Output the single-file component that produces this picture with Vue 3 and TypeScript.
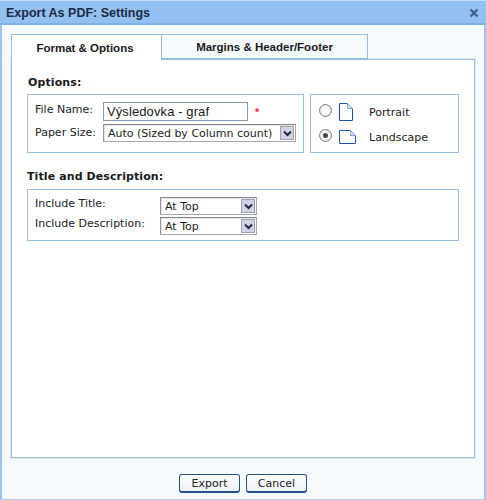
<script setup lang="ts">
const includes: string[] = ['Include Title:', 'Include Description:']
</script>

<template>
  <div class="window">
    <header class="titlebar">
      <span class="title">Export As PDF: Settings</span>
      <svg class="close" width="10" height="10" viewBox="0 0 10 10">
        <path d="M1.5 1.5 L8.5 8.5 M8.5 1.5 L1.5 8.5" stroke="#3f5f8a" stroke-width="2.2" fill="none" />
      </svg>
    </header>
    <main class="body">
      <nav class="tabs">
        <div class="tab active">Format &amp; Options</div>
        <div class="tab second">Margins &amp; Header/Footer</div>
      </nav>
      <section class="panel">
        <h2 class="heading first">Options:</h2>
        <div class="row">
          <div class="box options">
            <div class="line file">
              <span class="label name-label">File Name:</span>
              <div class="input">Výsledovka - graf</div>
              <span class="star">*</span>
            </div>
            <div class="line">
              <span class="label name-label paper">Paper Size:</span>
              <div class="select wide">
                <span class="value">Auto (Sized by Column count)</span>
                <span class="arrow">
                  <svg width="9" height="7" viewBox="0 0 9 7"><path d="M1 1.5 L4.5 5 L8 1.5" stroke="#1f2a44" stroke-width="2" fill="none" /></svg>
                </span>
              </div>
            </div>
          </div>
          <div class="box orient">
            <div class="orient-line">
              <span class="radio"></span>
              <svg class="page" width="15" height="19" viewBox="0 0 15 19">
                <path d="M1.5 .5 H9.5 L14.5 5.5 V17.5 H1.5 Z" fill="#fff" stroke="#1c56b4" />
                <path d="M9.5 .5 V5.5 H14.5" fill="#dbe7f7" stroke="#7ea4dc" />
              </svg>
              <span class="orient-text">Portrait</span>
            </div>
            <div class="orient-line">
              <span class="radio checked"></span>
              <svg class="page" width="19" height="15" viewBox="0 0 19 15">
                <path d="M1.5 .5 H12.5 L17.5 5.5 V13.5 H1.5 Z" fill="#fff" stroke="#1c56b4" />
                <path d="M12.5 .5 V5.5 H17.5" fill="#dbe7f7" stroke="#7ea4dc" />
              </svg>
              <span class="orient-text land">Landscape</span>
            </div>
          </div>
        </div>
        <h2 class="heading second-heading">Title and Description:</h2>
        <div class="box titles">
          <div v-for="item in includes" :key="item" class="line include">
            <span class="label include-label">{{ item }}</span>
            <div class="select narrow">
              <span class="value">At Top</span>
              <span class="arrow">
                <svg width="9" height="7" viewBox="0 0 9 7"><path d="M1 1.5 L4.5 5 L8 1.5" stroke="#1f2a44" stroke-width="2" fill="none" /></svg>
              </span>
            </div>
          </div>
        </div>
      </section>
      <footer class="actions">
        <button class="btn">Export</button>
        <button class="btn">Cancel</button>
      </footer>
    </main>
  </div>
</template>

<style>
html, body { margin: 0; background: #fff; }
</style>

<style scoped>
.window {
  width: 486px;
  height: 500px;
  box-sizing: border-box;
  display: flex;
  flex-direction: column;
  border-left: 2px solid #9cc4ec;
  border-right: 2px solid #9cc4ec;
  border-bottom: 1px solid #a9c8e8;
  background: #f5faff;
  font-family: "DejaVu Sans", Verdana, sans-serif;
  color: #222;
}
.titlebar {
  margin: 0 -2px;
  height: 25px;
  box-sizing: border-box;
  display: flex;
  align-items: center;
  justify-content: space-between;
  padding: 2px 7px 0 6px;
  background: #92c0f0;
  border-top: 1px solid #c2dcf6;
  border-bottom: 2px solid #7fb0e6;
}
.title {
  font: bold 12.5px "Liberation Sans", Arial, sans-serif;
  color: #1c2a44;
}
.close { display: block; }
.body {
  flex: 1;
  display: flex;
  flex-direction: column;
  padding: 9px 9px 0 9px;
  min-height: 0;
}
.tabs {
  display: flex;
  height: 25px;
  position: relative;
  z-index: 1;
}
.tab {
  box-sizing: border-box;
  display: flex;
  align-items: center;
  justify-content: center;
  font: bold 11.5px "Liberation Sans", Arial, sans-serif;
  color: #1a1a1a;
  border: 1px solid #96c0e6;
  border-left: 0;
  background: #f5faff;
}
.tab.active {
  width: 151px;
  height: 26px;
  padding-right: 3px;
  background: #fff;
  border-left: 1px solid #96c0e6;
  border-bottom: 0;
}
.tab.second { width: 206px; }
.panel {
  height: 399px;
  box-sizing: border-box;
  background: #fff;
  border: 1px solid #96c0e6;
  box-shadow: 0 0 0 1px #dbe9f7;
  padding: 0 15px;
}
.heading {
  margin: 0;
  font-size: 11px;
  line-height: 13px;
  font-weight: bold;
  color: #1a1a1a;
  letter-spacing: .1px;
}
.heading.first { padding: 16px 0 5px 1px; }
.second-heading { padding: 17px 0 6px 0; }
.row { display: flex; gap: 6px; }
.box {
  box-sizing: border-box;
  border: 1px solid #96c0e6;
  background: #fff;
}
.options {
  width: 277px;
  height: 59px;
  padding: 7px 0 0 7px;
}
.orient {
  width: 149px;
  height: 59px;
  padding: 5px 0 0 8px;
}
.line { display: flex; align-items: flex-start; }
.file { height: 22px; }
.label {
  font-size: 11px;
  line-height: 14px;
  color: #222;
}
.name-label { width: 68px; padding-top: 1px; }
.name-label.paper { padding-top: 2px; }
.input {
  box-sizing: border-box;
  width: 145px;
  height: 19px;
  border: 1px solid #7f9db9;
  padding-left: 3px;
  font: 13px/17px "Liberation Sans", Arial, sans-serif;
  letter-spacing: .1px;
  color: #222;
  background: #fff;
}
.star {
  margin-left: 7px;
  padding-top: 1px;
  color: #ee2a42;
  font: bold 11px/19px "Liberation Sans", Arial, sans-serif;
}
.select {
  box-sizing: border-box;
  display: flex;
  align-items: center;
  justify-content: space-between;
  border: 1px solid #a6a6ae;
  border-top-color: #85858f;
  border-left-color: #95959f;
  box-shadow: inset 1px 1px 0 #e4e4e8;
  background: #fff;
  padding: 0 1px 0 4px;
  font-size: 11px;
  color: #222;
}
.select.wide { width: 193px; height: 18px; }
.select.narrow { width: 97px; height: 18px; }
.arrow {
  width: 14px;
  height: 14px;
  box-sizing: border-box;
  display: flex;
  align-items: center;
  justify-content: center;
  background: #d2d3e4;
  border: 1px solid #a0a0b4;
}
.orient-line {
  display: flex;
  align-items: center;
  height: 25px;
}
.radio {
  box-sizing: border-box;
  width: 13px;
  height: 13px;
  flex: none;
  margin-bottom: 5px;
  border-radius: 50%;
  border: 1px solid #808080;
  background: radial-gradient(circle, #fafafa 40%, #d4d4d4 100%);
  display: flex;
  align-items: center;
  justify-content: center;
}
.radio.checked::after {
  content: "";
  width: 5px;
  height: 5px;
  border-radius: 50%;
  background: #444;
}
.page { margin-left: 6px; flex: none; }
.orient-text {
  font-size: 11px;
  color: #222;
  margin-left: 16px;
}
.orient-text.land { margin-left: 12px; }
.titles {
  height: 52px;
  padding: 7px 0 0 7px;
  width: 432px;
}
.include { height: 20px; }
.include-label { width: 125px; }
.actions {
  display: flex;
  justify-content: center;
  gap: 6px;
  padding: 16px 0 0 0;
}
.btn {
  width: 61px;
  height: 19px;
  padding: 0;
  box-sizing: border-box;
  border: 1px solid #27508f;
  border-bottom-width: 2px;
  border-radius: 3px;
  background: linear-gradient(#ffffff, #eaf0f8);
  font: 11px "DejaVu Sans", Verdana, sans-serif;
  color: #222;
}
</style>
